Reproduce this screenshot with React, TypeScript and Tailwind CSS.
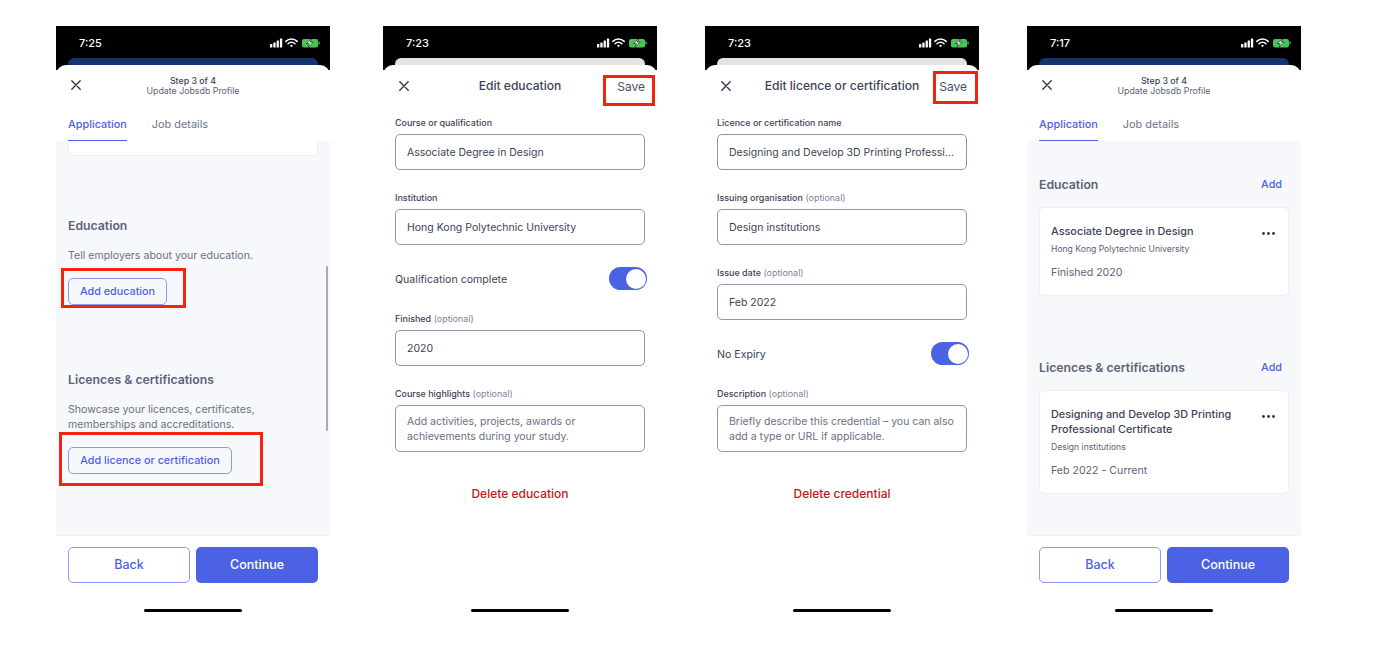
import React from "react";

const F = { fontFamily: "Inter, 'Liberation Sans', sans-serif" };

function StatusIcons() {
  return (
    <svg width="50" height="10" viewBox="0 0 50 10" className="block">
      <g fill="#fff">
        <rect x="0" y="6" width="2.3" height="3.4" rx="0.5" />
        <rect x="3.3" y="4.5" width="2.3" height="4.9" rx="0.5" />
        <rect x="6.6" y="2.5" width="2.3" height="6.9" rx="0.5" />
        <rect x="9.9" y="0.5" width="2.3" height="8.9" rx="0.5" />
      </g>
      <g fill="none" stroke="#fff" strokeLinecap="round">
        <path d="M15.8 3.4a8 8 0 0 1 11.4 0" strokeWidth="1.5" />
        <path d="M18 5.7a4.9 4.9 0 0 1 7 0" strokeWidth="1.5" />
      </g>
      <path d="M20.1 7.4a2.2 2.2 0 0 1 2.8 0L21.5 9.3z" fill="#fff" />
      <rect x="32" y="1" width="16" height="8.4" rx="2" fill="#45c655" />
      <rect x="48.4" y="3.6" width="1.3" height="3" rx="0.5" fill="#45c655" />
      <path d="M41.4 0.8 36.4 5.6h3l-1.2 3.6 5-5h-3z" fill="#fff" stroke="#0a0a0a" strokeWidth="0.6" />
    </svg>
  );
}

function CloseIcon() {
  return (
    <svg width="10" height="10" viewBox="0 0 10 10" className="block">
      <path d="M0.8 0.8 9.2 9.2M9.2 0.8 0.8 9.2" stroke="#2b3245" strokeWidth="1.3" strokeLinecap="round" />
    </svg>
  );
}

function Dots() {
  return (
    <svg width="13" height="3" viewBox="0 0 13 3" className="block">
      <circle cx="1.5" cy="1.5" r="1.4" fill="#2f3648" />
      <circle cx="6.5" cy="1.5" r="1.4" fill="#2f3648" />
      <circle cx="11.5" cy="1.5" r="1.4" fill="#2f3648" />
    </svg>
  );
}

function Phone({ time, peek, children }: { time: string; peek: string; children: React.ReactNode }) {
  return (
    <div className="relative w-[274px] h-[594px] flex flex-col bg-white shrink-0">
      <div className="relative h-[44px] bg-black shrink-0">
        <div className="flex items-center justify-between pl-[23px] pr-[10px] pt-[10px]">
          <span className="text-[11px] leading-[14px] text-white font-medium">{time}</span>
          <StatusIcons />
        </div>
        <div className={`absolute left-[12px] right-[12px] top-[32px] h-[12px] rounded-t-[6px] ${peek}`} />
      </div>
      <div className="relative -mt-[5px] flex-1 flex flex-col bg-white rounded-t-[10px] overflow-hidden">
        {children}
      </div>
    </div>
  );
}

function StepHeader() {
  return (
    <>
      <div className="relative h-[39px] shrink-0 flex flex-col items-center pt-[11px] text-[8.8px] leading-[10px]">
        <div className="absolute left-[15px] top-[15px]">
          <CloseIcon />
        </div>
        <span className="font-medium text-[#3c4356]">Step 3 of 4</span>
        <span className="text-[#5a6378]">Update Jobsdb Profile</span>
      </div>
      <div className="flex h-[37px] shrink-0 gap-[25px] px-[12px] text-[10.9px]">
        <div className="h-full border-b-[1.5px] border-[#4c62e4] pt-[12px] font-medium text-[#4c62e4]">Application</div>
        <div className="pt-[12px] text-[#6b7489]">Job details</div>
      </div>
    </>
  );
}

function Footer() {
  return (
    <>
      <div className="border-t border-[#eef0f4] h-[85px] shrink-0 bg-white" />
      <div className="absolute left-[12px] right-[12px] bottom-[37px] flex gap-[6px] text-[12.5px] font-medium">
        <div className="w-[122px] h-[36px] flex items-center justify-center pt-[1px] rounded-[5px] border border-[#8a9bf0] text-[#4c62e4]">Back</div>
        <div className="w-[122px] h-[36px] flex items-center justify-center pt-[1px] rounded-[5px] bg-[#4c62e4] text-white">Continue</div>
      </div>
    </>
  );
}

function HomeBar() {
  return <div className="absolute left-[88px] bottom-[8px] w-[98px] h-[3px] rounded-full bg-black" />;
}

function Label({ text, optional }: { text: string; optional?: boolean }) {
  return (
    <div className="text-[8.95px] leading-[11px] font-medium text-[#3c4356]">
      {text}
      {optional && <span className="font-normal text-[#7a8397]"> (optional)</span>}
    </div>
  );
}

function Field({ label, optional, value, className }: { label: string; optional?: boolean; value: string; className?: string }) {
  return (
    <div className={className}>
      <Label text={label} optional={optional} />
      <div className="mt-[6px] h-[36px] flex items-center pt-[1px] px-[11px] rounded-[5px] border border-[#8e97ad] text-[10.5px] text-[#3c4356] whitespace-nowrap">
        {value}
      </div>
    </div>
  );
}

function Area({ label, text, className }: { label: string; text: React.ReactNode; className?: string }) {
  return (
    <div className={className}>
      <Label text={label} optional />
      <div className="mt-[6px] h-[47px] flex items-center px-[11px] rounded-[5px] border border-[#8e97ad] text-[10.5px] leading-[15px] text-[#687186] whitespace-nowrap">
        <span>{text}</span>
      </div>
    </div>
  );
}

function Toggle({ label, className }: { label: string; className?: string }) {
  return (
    <div className={`flex items-center justify-between ${className ?? ""}`}>
      <span className="pt-[2px] text-[10.6px] text-[#3c4356]">{label}</span>
      <div className="-mr-[2px] w-[38px] h-[23px] rounded-full bg-[#4c62e4] flex items-center justify-end pr-[1px]">
        <div className="w-[20px] h-[20px] rounded-full bg-white" />
      </div>
    </div>
  );
}

function EditHeader({ title }: { title: string }) {
  return (
    <div className="relative h-[41px] shrink-0 flex items-center justify-center pt-[2px] text-[12.1px] font-medium text-[#3c4356]">
      <div className="absolute left-[16px] top-[16px]">
        <CloseIcon />
      </div>
      <span>{title}</span>
      <span className="absolute right-[12px] top-[13px] text-[12px] font-normal text-[#4a5165]">Save</span>
    </div>
  );
}

function Del({ text }: { text: string }) {
  return <div className="mt-[35px] text-center text-[12px] leading-[14px] font-medium text-[#c4161c]">{text}</div>;
}

function RedBox({ className }: { className: string }) {
  return <div className={`absolute border-[3px] border-[#f4230f] ${className}`} />;
}

function PhoneOne() {
  return (
    <Phone time="7:25" peek="bg-[#14336f]">
      <StepHeader />
      <div className="flex-1 min-h-0 bg-[#f7f8fb] px-[12px] text-[#5a6378]">
        <div className="h-[15px] bg-white border border-t-0 border-[#eceef2] rounded-b-[5px]" />
        <h2 className="mt-[62px] text-[12.25px] leading-[15px] font-semibold text-[#5a6378]">Education</h2>
        <p className="mt-[15px] text-[10.6px] leading-[15px] text-[#687186]">Tell employers about your education.</p>
        <div className="mt-[15px] w-[99px] h-[27px] flex items-center justify-center pt-[1px] rounded-[5px] border border-[#8a9bf0] text-[10.8px] font-medium text-[#4c62e4]">Add education</div>
        <h2 className="mt-[67px] text-[12.25px] leading-[15px] font-semibold text-[#5a6378]">Licences &amp; certifications</h2>
        <p className="mt-[15px] text-[10.6px] leading-[15px] text-[#687186]">
          Showcase your licences, certificates,
          <br />
          memberships and accreditations.
        </p>
        <div className="mt-[15px] w-[164px] h-[27px] flex items-center justify-center pt-[1px] rounded-[5px] border border-[#8a9bf0] text-[10.8px] font-medium text-[#4c62e4]">Add licence or certification</div>
      </div>
      <Footer />
      <div className="absolute left-[270px] top-[201px] w-[2px] h-[165px] rounded-full bg-[#a9abb0]" />
      <RedBox className="left-[5px] top-[203px] w-[125px] h-[40px]" />
      <RedBox className="left-[3px] top-[367px] w-[204px] h-[54px]" />
      <HomeBar />
    </Phone>
  );
}

function PhoneTwo() {
  return (
    <Phone time="7:23" peek="bg-[#e3e3e3]">
      <EditHeader title="Edit education" />
      <div className="px-[12px] pt-[11px]">
        <Field label="Course or qualification" value="Associate Degree in Design" />
        <Field className="mt-[22px]" label="Institution" value="Hong Kong Polytechnic University" />
        <Toggle className="mt-[22px]" label="Qualification complete" />
        <Field className="mt-[23px]" label="Finished" optional value="2020" />
        <Area
          className="mt-[22px]"
          label="Course highlights"
          text={
            <>
              Add activities, projects, awards or
              <br />
              achievements during your study.
            </>
          }
        />
        <Del text="Delete education" />
      </div>
      <RedBox className="left-[220px] top-[10px] w-[52px] h-[31px]" />
      <HomeBar />
    </Phone>
  );
}

function PhoneThree() {
  return (
    <Phone time="7:23" peek="bg-[#e3e3e3]">
      <EditHeader title="Edit licence or certification" />
      <div className="px-[12px] pt-[11px]">
        <Field label="Licence or certification name" value="Designing and Develop 3D Printing Professi..." />
        <Field className="mt-[22px]" label="Issuing organisation" optional value="Design institutions" />
        <Field className="mt-[22px]" label="Issue date" optional value="Feb 2022" />
        <Toggle className="mt-[22px]" label="No Expiry" />
        <Area
          className="mt-[23px]"
          label="Description"
          text={
            <>
              Briefly describe this credential – you can also
              <br />
              add a type or URL if applicable.
            </>
          }
        />
        <Del text="Delete credential" />
      </div>
      <RedBox className="left-[228px] top-[6px] w-[45px] h-[33px]" />
      <HomeBar />
    </Phone>
  );
}

function SectionHead({ title, className }: { title: string; className?: string }) {
  return (
    <div className={`flex items-center justify-between ${className ?? ""}`}>
      <h2 className="text-[12.25px] leading-[15px] font-semibold text-[#5a6378]">{title}</h2>
      <span className="pr-[7px] text-[10.8px] leading-[15px] font-medium text-[#4c62e4]">Add</span>
    </div>
  );
}

function InfoCard({ title, sub, when }: { title: React.ReactNode; sub: string; when: string }) {
  return (
    <div className="relative mt-[15px] bg-white border border-[#eceef2] rounded-[5px] pl-[11px] pr-[11px] pt-[16px] pb-[15px]">
      <div className="absolute right-[13px] top-[24px]">
        <Dots />
      </div>
      <div className="text-[10.85px] leading-[15px] font-medium text-[#3c4356]">{title}</div>
      <div className="mt-[4px] text-[8.6px] leading-[13px] text-[#5a6378]">{sub}</div>
      <div className="mt-[9px] text-[10.6px] leading-[15px] text-[#5a6378]">{when}</div>
    </div>
  );
}

function PhoneFour() {
  return (
    <Phone time="7:17" peek="bg-[#14336f]">
      <StepHeader />
      <div className="flex-1 min-h-0 bg-[#f7f8fb] px-[12px]">
        <SectionHead className="mt-[36px]" title="Education" />
        <InfoCard title="Associate Degree in Design" sub="Hong Kong Polytechnic University" when="Finished 2020" />
        <SectionHead className="mt-[64px]" title="Licences & certifications" />
        <InfoCard
          title={
            <>
              Designing and Develop 3D Printing
              <br />
              Professional Certificate
            </>
          }
          sub="Design institutions"
          when="Feb 2022 - Current"
        />
      </div>
      <Footer />
      <HomeBar />
    </Phone>
  );
}

export default function App() {
  return (
    <div style={F} className="w-[1397px] h-[662px] bg-white overflow-hidden flex items-start pt-[26px] pl-[56px] gap-[48px] antialiased">
      <div className="mr-[5px]">
        <PhoneOne />
      </div>
      <PhoneTwo />
      <PhoneThree />
      <PhoneFour />
    </div>
  );
}
